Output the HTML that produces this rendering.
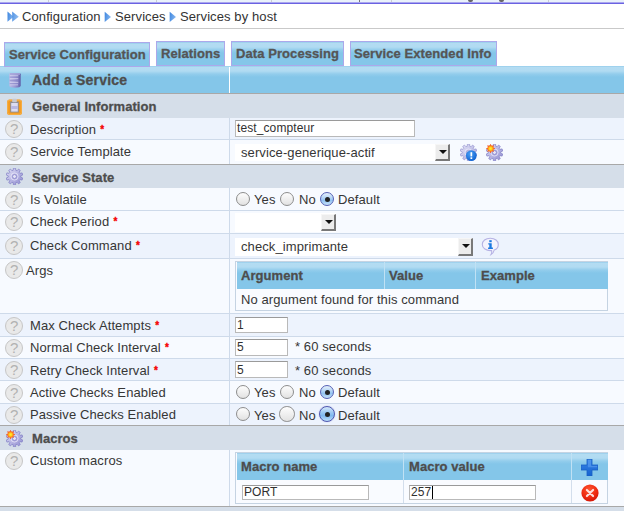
<!DOCTYPE html>
<html><head><meta charset="utf-8">
<style>
*{margin:0;padding:0;box-sizing:border-box}
html,body{width:624px;height:511px;overflow:hidden;background:#fff}
body{font-family:"Liberation Sans",sans-serif;font-size:13px;color:#242424;position:relative}
.a{position:absolute}
.t{position:absolute;white-space:nowrap;line-height:16px;height:16px;margin-top:1px;letter-spacing:0.1px;color:#363636}
.t.b{font-weight:bold;color:#4d4d4d;letter-spacing:0.05px;-webkit-text-stroke:0.3px #4d4d4d}
.row{position:absolute;left:0;width:624px}
.r1{background:#edf3fd}
.r2{background:#f7faff}
.sec{position:absolute;left:0;width:624px;background:#d5dee9}
.hl{position:absolute;left:0;width:624px;height:1px}
.vd{position:absolute;left:229px;width:1px;background:#cedaea}
.q{position:absolute;left:5px;width:18px;height:18px;border-radius:50%;background:#e9e9e9;border:1px solid #c6c6c6;color:#b2b2b2;font-size:15px;line-height:15px;text-align:center;text-indent:0.5px}
.inp{position:absolute;background:#fff;border:1px solid #b9b9b9;border-top-color:#9a9a9a;font-size:12px;line-height:14px;padding-left:1px;white-space:nowrap;overflow:hidden;color:#303030;letter-spacing:0.1px}
.sel{position:absolute;background:#fff}
.arr{position:absolute;width:14px;height:17px;background:#ececec;border-right:2px solid #787878;border-bottom:2px solid #787878;border-top:1px solid #f6f6f6;border-left:1px solid #f6f6f6}
.arr:after{content:"";position:absolute;left:2.5px;top:5px;border:4px solid transparent;border-top:4.5px solid #111;border-bottom:0}
.rad{position:absolute;width:14px;height:14px;border-radius:50%;border:1px solid #8d8d8d;background:linear-gradient(#fdfdfd,#e2e2e2)}
.rad.on:after{content:"";position:absolute;left:3.5px;top:3.5px;width:5px;height:5px;border-radius:50%;background:#222}
.rad.on{border-color:#5560b4;background:linear-gradient(#e6f0fb 0,#b4d5f5 40%,#93c3f1 62%,#c6e1f9 100%)}
.rad.big{width:16px;height:16px;border-color:#4f58b0;background:linear-gradient(#d6e8fb 0,#9ac8f3 40%,#7fb8f0 62%,#bcdffa 100%);box-shadow:0 0 1px #8a90d0}
.rad.big:after{left:4.5px;top:4.5px}
.tab{position:absolute;top:41px;height:25px;border:1px solid #aca8ea;background:linear-gradient(#95cceb 0,#b3dcf2 1.5px,#b1dbf2 5px,#93cdec 8px,#84c6e9 11px);font-weight:bold;color:#555;font-size:13px;line-height:23px;white-space:nowrap;letter-spacing:0.08px;-webkit-text-stroke:0.3px #555}
.th{position:absolute;background:linear-gradient(#95cceb 0,#b3dcf2 1.5px,#b1dbf2 5px,#93cdec 8px,#84c6e9 11px)}
.t .red{color:#f50000;font-weight:bold;font-size:10px;position:relative;top:-1px;left:0.5px;letter-spacing:0;-webkit-text-stroke:0.3px #f50000}
</style></head><body>


<svg width="0" height="0" style="position:absolute">
<defs>
<linearGradient id="gg" x1="0" y1="0" x2="1" y2="1"><stop offset="0" stop-color="#e2e1f6"/><stop offset="0.45" stop-color="#bcbae6"/><stop offset="1" stop-color="#8f8ccf"/></linearGradient>
<radialGradient id="sg"><stop offset="0" stop-color="#fff02a"/><stop offset="0.3" stop-color="#ffd21e"/><stop offset="0.6" stop-color="#ff7a1a"/><stop offset="1" stop-color="#ee3318"/></radialGradient>
<radialGradient id="bg" cx="0.4" cy="0.35" r="0.7"><stop offset="0" stop-color="#4aa0f5"/><stop offset="1" stop-color="#0d5fd0"/></radialGradient>
<radialGradient id="rg" cx="0.45" cy="0.3" r="0.75"><stop offset="0" stop-color="#ff5530"/><stop offset="0.6" stop-color="#ee2a10"/><stop offset="1" stop-color="#cf1205"/></radialGradient>
<linearGradient id="pg" x1="0" y1="0" x2="0" y2="1"><stop offset="0" stop-color="#3a86e8"/><stop offset="1" stop-color="#1462cf"/></linearGradient>
<linearGradient id="cg" x1="0" y1="0" x2="1" y2="0"><stop offset="0" stop-color="#bcbae6"/><stop offset="0.5" stop-color="#9b98d3"/><stop offset="0.75" stop-color="#807dc1"/><stop offset="1" stop-color="#5e5ba6"/></linearGradient>
<linearGradient id="ag" x1="0" y1="0" x2="1" y2="0.3"><stop offset="0" stop-color="#3d86e0"/><stop offset="1" stop-color="#86b6ee"/></linearGradient>
<g id="gear"><path d="M7.20 2.33 L7.39 0.17 L9.61 0.17 L9.80 2.33 L11.07 2.75 L12.50 1.11 L14.29 2.41 L13.17 4.27 L13.96 5.36 L16.08 4.88 L16.76 6.98 L14.76 7.83 L14.76 9.17 L16.76 10.02 L16.08 12.12 L13.96 11.64 L13.17 12.73 L14.29 14.59 L12.50 15.89 L11.07 14.25 L9.80 14.67 L9.61 16.83 L7.39 16.83 L7.20 14.67 L5.93 14.25 L4.50 15.89 L2.71 14.59 L3.83 12.73 L3.04 11.64 L0.92 12.12 L0.24 10.02 L2.24 9.17 L2.24 7.83 L0.24 6.98 L0.92 4.88 L3.04 5.36 L3.83 4.27 L2.71 2.41 L4.50 1.11 L5.93 2.75Z" fill="url(#gg)" stroke="#7f7cc4" stroke-width="0.7" stroke-linejoin="round"/><circle cx="8.5" cy="8.5" r="3.6" fill="none" stroke="#e6e5f7" stroke-width="1" opacity="0.8"/><circle cx="8.5" cy="8.5" r="2" fill="#e4e3f6" stroke="#8582c8" stroke-width="0.8"/></g>
<g id="star"><path d="M4.60 0.00 L5.75 1.83 L7.85 1.35 L7.37 3.45 L9.20 4.60 L7.37 5.75 L7.85 7.85 L5.75 7.37 L4.60 9.20 L3.45 7.37 L1.35 7.85 L1.83 5.75 L0.00 4.60 L1.83 3.45 L1.35 1.35 L3.45 1.83Z" fill="url(#sg)"/></g>
</defs></svg>

<!-- top strip -->
<div class="a" style="left:0;top:0;width:624px;height:2px;background:#e9f1fb"></div>
<div class="a" style="left:0;top:2px;width:624px;height:1px;background:#aaa6ee"></div>
<div class="a" style="left:0;top:3px;width:624px;height:1px;background:#6a62e2"></div>
<div class="a" style="left:48px;top:0;width:1px;height:2px;background:#c9ccd2"></div>
<div class="a" style="left:156px;top:0;width:1px;height:2px;background:#c9ccd2"></div>
<div class="a" style="left:0;top:28px;width:624px;height:1px;background:#c9c9c9"></div>

<div class="a" style="left:271px;top:0;width:1px;height:2px;background:#c9ccd2"></div>
<div class="a" style="left:391px;top:0;width:1px;height:2px;background:#c9ccd2"></div>
<div class="a" style="left:548px;top:0;width:1px;height:2px;background:#c9ccd2"></div>
<div class="a" style="left:359px;top:0;width:1px;height:2px;background:#777"></div>
<div class="a" style="left:468px;top:0;width:5px;height:2px;background:#666;border-radius:0 0 3px 3px"></div>
<div class="a" style="left:499px;top:0;width:5px;height:2px;background:#666;border-radius:0 0 3px 3px"></div>
<!-- breadcrumb -->
<svg class="a" style="left:7px;top:10px" width="13" height="13" viewBox="0 0 13 13"><path d="M0.5 1.6 L6.6 6.7 L0.5 11.8Z" fill="url(#ag)"/><path d="M5.2 1.6 L11.8 6.7 L5.2 11.8Z" fill="url(#ag)" opacity="0.9"/></svg>
<div class="t" style="left:22px;top:8px;color:#333">Configuration</div>
<svg class="a" style="left:104px;top:11px" width="8" height="12" viewBox="0 0 8 12"><path d="M0.7 0.7 L7 5.9 L0.7 11.1Z" fill="url(#ag)"/></svg>
<div class="t" style="left:115px;top:8px;color:#333">Services</div>
<svg class="a" style="left:169px;top:11px" width="8" height="12" viewBox="0 0 8 12"><path d="M0.7 0.7 L7 5.9 L0.7 11.1Z" fill="url(#ag)"/></svg>
<div class="t" style="left:180px;top:8px;color:#333">Services by host</div>

<!-- tabs -->
<div class="tab" style="left:4px;top:42px;width:146px;padding-left:4px;z-index:2">Service Configuration</div>
<div class="tab" style="left:156px;width:69px;padding-left:4px;">Relations</div>
<div class="tab" style="left:231px;width:113px;padding-left:4px;">Data Processing</div>
<div class="tab" style="left:350px;width:147px;padding-left:3px;">Service Extended Info</div>

<!-- header band -->
<div class="th" style="left:0;top:66px;width:624px;height:27px"></div>
<div class="a" style="left:229px;top:67px;width:1px;height:26px;background:#fff"></div>
<div class="hl" style="top:93px;background:#a8a8a8"></div>
<div class="t b" style="left:32px;top:71px;font-size:14px;letter-spacing:0.2px">Add a Service</div>

<!-- General Information -->
<div class="sec" style="top:94px;height:24px"></div>
<div class="t b" style="left:32px;top:98px">General Information</div>

<div class="row r1" style="top:118px;height:22px"></div>
<div class="row r2" style="top:140px;height:24px"></div>
<div class="hl" style="top:139px;background:#cedaea"></div>
<div class="hl" style="top:164px;background:#a8a8a8"></div>
<div class="vd" style="top:118px;height:46px"></div>
<div class="q" style="top:120px">?</div>
<div class="q" style="top:143px">?</div>
<div class="t" style="left:30px;top:121px">Description <span class="red">*</span></div>
<div class="t" style="left:30px;top:143px">Service Template</div>
<div class="inp" style="left:235px;top:120px;width:180px;height:17px">test_compteur</div>
<div class="sel" style="left:235px;top:144px;width:215px;height:17px"></div>
<div class="t" style="left:241px;top:144px">service-generique-actif</div>
<div class="arr" style="left:435px;top:144px;width:15px"></div>

<!-- Service State -->
<div class="sec" style="top:165px;height:23px"></div>
<div class="t b" style="left:32px;top:169px">Service State</div>

<div class="row r2" style="top:188px;height:23px"></div>
<div class="row r2" style="top:211px;height:23px"></div>
<div class="row r1" style="top:234px;height:25px"></div>
<div class="row r2" style="top:259px;height:55px"></div>
<div class="row r1" style="top:314px;height:23px"></div>
<div class="row r2" style="top:337px;height:22px"></div>
<div class="row r1" style="top:359px;height:22px"></div>
<div class="row r2" style="top:381px;height:22px"></div>
<div class="row r1" style="top:403px;height:23px"></div>
<div class="hl" style="top:210px;background:#cedaea"></div>
<div class="hl" style="top:233px;background:#cedaea"></div>
<div class="hl" style="top:258px;background:#cedaea"></div>
<div class="hl" style="top:313px;background:#cedaea"></div>
<div class="hl" style="top:336px;background:#cedaea"></div>
<div class="hl" style="top:358px;background:#cedaea"></div>
<div class="hl" style="top:380px;background:#cedaea"></div>
<div class="hl" style="top:403px;background:#cedaea"></div>
<div class="hl" style="top:425px;background:#a8a8a8"></div>
<div class="vd" style="top:188px;height:237px"></div>

<div class="q" style="top:191px">?</div>
<div class="q" style="top:213px">?</div>
<div class="q" style="top:237px">?</div>
<div class="q" style="top:261px">?</div>
<div class="q" style="top:317px">?</div>
<div class="q" style="top:339px">?</div>
<div class="q" style="top:361px">?</div>
<div class="q" style="top:384px">?</div>
<div class="q" style="top:406px">?</div>

<div class="t" style="left:30px;top:191px">Is Volatile</div>
<div class="t" style="left:30px;top:213px">Check Period <span class="red">*</span></div>
<div class="t" style="left:30px;top:237px">Check Command <span class="red">*</span></div>
<div class="t" style="left:26px;top:262px">Args</div>
<div class="t" style="left:30px;top:317px">Max Check Attempts <span class="red">*</span></div>
<div class="t" style="left:30px;top:339px">Normal Check Interval <span class="red">*</span></div>
<div class="t" style="left:30px;top:362px">Retry Check Interval <span class="red">*</span></div>
<div class="t" style="left:30px;top:384px">Active Checks Enabled</div>
<div class="t" style="left:30px;top:406px">Passive Checks Enabled</div>

<!-- Is volatile radios -->
<div class="rad" style="left:236px;top:192px"></div><div class="t" style="left:254px;top:191px">Yes</div>
<div class="rad" style="left:280px;top:192px"></div><div class="t" style="left:299px;top:191px">No</div>
<div class="rad on" style="left:320px;top:192px"></div><div class="t" style="left:338px;top:191px">Default</div>

<!-- check period -->
<div class="sel" style="left:235px;top:213px;width:101px;height:19px"></div>
<div class="arr" style="left:321px;top:214px;width:15px"></div>
<!-- check command -->
<div class="sel" style="left:235px;top:238px;width:238px;height:18px"></div>
<div class="t" style="left:241px;top:238px">check_imprimante</div>
<div class="arr" style="left:458px;top:238px;height:18px;width:15px"></div>

<!-- args table -->
<div class="a" style="left:235px;top:261px;width:373px;height:50px;border:1px solid #c5d3e2;background:#f9fbff"></div>
<div class="th" style="left:237px;top:262px;width:371px;height:27px"></div>
<div class="a" style="left:384px;top:262px;width:1px;height:27px;background:#c0e1f4"></div>
<div class="a" style="left:475px;top:262px;width:1px;height:27px;background:#c0e1f4"></div>
<div class="t b" style="left:241px;top:267px">Argument</div>
<div class="t b" style="left:389px;top:267px">Value</div>
<div class="t b" style="left:481px;top:267px">Example</div>
<div class="t" style="left:241px;top:291px">No argument found for this command</div>

<!-- inputs -->
<div class="inp" style="left:235px;top:317px;width:53px;height:16px">1</div>
<div class="inp" style="left:235px;top:339px;width:53px;height:17px">5</div>
<div class="t" style="left:295px;top:338px">* 60 seconds</div>
<div class="inp" style="left:235px;top:361px;width:53px;height:17px;line-height:16px">5</div>
<div class="t" style="left:295px;top:362px">* 60 seconds</div>

<div class="rad" style="left:236px;top:385px"></div><div class="t" style="left:254px;top:384px">Yes</div>
<div class="rad" style="left:280px;top:385px"></div><div class="t" style="left:299px;top:384px">No</div>
<div class="rad on" style="left:320px;top:385px"></div><div class="t" style="left:338px;top:384px">Default</div>

<div class="rad" style="left:236px;top:407px"></div><div class="t" style="left:254px;top:407px">Yes</div>
<div class="rad" style="left:279.2px;top:406.2px;width:15.6px;height:15.6px"></div><div class="t" style="left:299px;top:407px">No</div>
<div class="rad on big" style="left:319px;top:406px"></div><div class="t" style="left:338px;top:407px">Default</div>

<!-- Macros -->
<div class="sec" style="top:426px;height:24px"></div>
<div class="t b" style="left:32px;top:430px">Macros</div>
<div class="row r2" style="top:450px;height:56px"></div>
<div class="vd" style="top:450px;height:56px"></div>
<div class="hl" style="top:506px;background:#a8a8a8"></div>
<div class="sec" style="top:507px;height:4px"></div>
<div class="q" style="top:452px">?</div>
<div class="t" style="left:30px;top:452px">Custom macros</div>

<div class="a" style="left:235px;top:452px;width:373px;height:52px;border:1px solid #c5d3e2;background:#f9fbff"></div>
<div class="th" style="left:237px;top:453px;width:371px;height:27px"></div>
<div class="a" style="left:403px;top:480px;width:1px;height:23px;background:#d3deec"></div>
<div class="a" style="left:571px;top:480px;width:1px;height:23px;background:#d3deec"></div>
<div class="a" style="left:403px;top:453px;width:1px;height:27px;background:#c0e1f4"></div>
<div class="a" style="left:571px;top:453px;width:1px;height:27px;background:#c0e1f4"></div>
<div class="t b" style="left:241px;top:458px">Macro name</div>
<div class="t b" style="left:409px;top:458px">Macro value</div>
<div class="inp" style="left:242px;top:485px;width:127px;height:15px;line-height:12px">PORT</div>
<div class="inp" style="left:409px;top:485px;width:127px;height:15px;line-height:12px">257</div>


<!-- icons -->
<svg class="a" style="left:9px;top:73px" width="12" height="15" viewBox="0 0 12 15"><path d="M0.3 1.2 Q0.3 0.2 1.4 0.2 L10.6 0.2 Q11.7 0.2 11.7 1.2 L11.7 12.6 Q11.7 14.8 6 14.8 Q0.3 14.8 0.3 12.6Z" fill="url(#cg)"/><rect x="1" y="0.2" width="10" height="1.5" fill="#a9a6da"/><path d="M0.8 2.8 H9.3 M0.8 5.7 H9.3 M0.8 9.3 H9.3 M0.8 11.8 H9" stroke="#d9d8f3" stroke-width="0.9" opacity="0.9"/><path d="M0.8 4.2 H9.3 M0.8 7.5 H9.3 M0.8 10.6 H9.3" stroke="#8f8ccb" stroke-width="1.2" opacity="0.55"/></svg>
<svg class="a" style="left:7px;top:98px" width="15" height="17" viewBox="0 0 15 17"><rect x="0" y="1.5" width="15" height="15.5" rx="2.5" fill="#f39a1f"/><rect x="0.7" y="2.2" width="13.6" height="14.1" rx="2" fill="none" stroke="#f7b958" stroke-width="0.8"/><rect x="3.2" y="3.5" width="8.6" height="11" fill="#8d8d96"/><rect x="4.2" y="5" width="6.6" height="8.6" fill="#dcdcf2"/><rect x="4.2" y="8" width="6.6" height="3" fill="#b9b8e4"/><rect x="5.2" y="0.8" width="4.6" height="3.4" rx="0.8" fill="#c9c9cf"/></svg>
<svg class="a" style="left:6px;top:168px" width="17" height="17" viewBox="0 0 17 17"><use href="#gear"/></svg>
<svg class="a" style="left:6px;top:430px" width="17" height="17" viewBox="0 0 17 17"><use href="#gear"/><use href="#star" x="0" y="0"/></svg>
<svg class="a" style="left:460px;top:144px" width="17" height="17" viewBox="0 0 17 17"><use href="#gear" opacity="0.8"/><circle cx="11.3" cy="11.6" r="5.4" fill="url(#bg)"/><rect x="10.5" y="8.2" width="1.7" height="4.2" fill="#fff"/><rect x="10.5" y="13.3" width="1.7" height="1.7" fill="#fff"/></svg>
<svg class="a" style="left:486px;top:144px" width="17" height="17" viewBox="0 0 17 17"><use href="#gear"/><use href="#star" x="0" y="0"/></svg>
<svg class="a" style="left:481px;top:237px" width="19" height="19" viewBox="0 0 19 19"><path d="M9.3 1.2 C14 1.2 17.3 3.8 17.3 7.4 C17.3 10.2 15.4 12.2 13.2 13 C12.8 15 11.8 16.6 10 17.6 C10.8 16.2 10.9 14.8 10.6 13.6 C5 14 1.3 11.2 1.3 7.4 C1.3 3.8 4.6 1.2 9.3 1.2Z" fill="#f4f3fd" stroke="#b5b2e4" stroke-width="1.1"/><rect x="8.3" y="3.2" width="2.4" height="2" fill="#1a78e0"/><path d="M7.3 6.2 H10.7 V10.6 H11.9 V11.9 H7.1 V10.6 H8.3 V7.5 H7.3Z" fill="#1a78e0"/></svg>
<svg class="a" style="left:581px;top:459px" width="17" height="17" viewBox="0 0 17 17"><path d="M6 0 H11 V6 H17 V11 H11 V17 H6 V11 H0 V6 H6Z" fill="url(#pg)" stroke="#1a5fc4" stroke-width="0.8"/><path d="M7 1 H10 V7 H16 V8.3 H7Z" fill="#5ea0f0" opacity="0.6"/></svg>
<svg class="a" style="left:580.6px;top:483.6px" width="18" height="18" viewBox="0 0 18 18"><circle cx="9" cy="9" r="8.6" fill="url(#rg)"/><path d="M5.9 5.9 L12.1 12.1 M12.1 5.9 L5.9 12.1" stroke="#ffeeee" stroke-width="2.1" stroke-linecap="round" opacity="0.92"/></svg>

<div class="a" style="left:432px;top:486px;width:1px;height:13px;background:#000"></div>
</body></html>
